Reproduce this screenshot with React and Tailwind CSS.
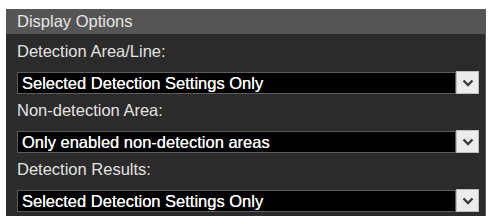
export default function App() {
    const groups = [
        { label: "Detection Area/Line:", value: "Selected Detection Settings Only" },
        { label: "Non-detection Area:", value: "Only enabled non-detection areas" },
        { label: "Detection Results:", value: "Selected Detection Settings Only" },
    ];

    return (
        <div className="w-[490px] h-[220px] bg-white pt-[9px] pl-[6px]" style={{ fontFamily: '"Liberation Sans", Arial, sans-serif' }}>
            <div className="w-[480px] h-[207px] bg-[#2b2b2b] border-r border-[#5a5a5a]">
                <div className="h-[25px] bg-[#555555] pl-[11px] text-[16.5px] leading-[25px] text-[#e6e6e6]">
                    Display Options
                </div>
                <div className="pt-[6px] pl-[11px]">
                    {groups.map((g, i) => (
                        <div key={i} className="h-[59px]">
                            <div className="h-[22px] leading-[22px] text-[16.5px] text-[#e2e2e2]">{g.label}</div>
                            <div className="mt-[9px] flex items-center w-[462px]">
                                <div className="flex-1 h-[22px] bg-black border border-[#5c5c5c] pl-[4px] text-[16.5px] leading-[20px] text-white [text-shadow:0_0_0.4px_#fff]">
                                    {g.value}
                                </div>
                                <div className="w-[23px] h-[23px] bg-[#ececec] border border-[#bdbdbd] flex items-center justify-center">
                                    <svg width="12" height="8" viewBox="0 0 12 8">
                                        <polyline points="1.5,1.5 6,6 10.5,1.5" fill="none" stroke="#3a3a3a" strokeWidth="2.4" />
                                    </svg>
                                </div>
                            </div>
                        </div>
                    ))}
                </div>
            </div>
        </div>
    );
}
